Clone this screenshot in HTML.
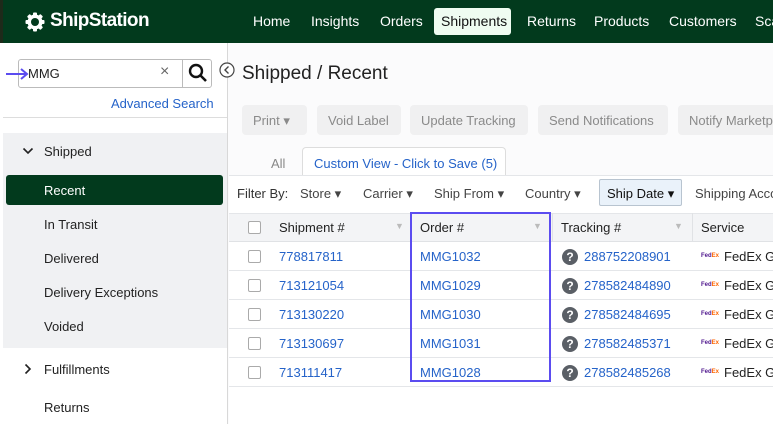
<!DOCTYPE html><html><head><style>
*{margin:0;padding:0;box-sizing:border-box}
body{width:773px;height:424px;overflow:hidden;font-family:"Liberation Sans",sans-serif;background:#fbfbfc;position:relative;color:#222}
.a{position:absolute;white-space:nowrap}
.hdr{left:0;top:0;width:773px;height:43px;background:#023a1d}
.nav{top:13px;color:#fff;font-size:14px}
.side{left:0;top:43px;width:228px;height:381px;background:#fff;border-right:1px solid #d8d8d8}
.si{left:44px;font-size:13px;color:#222}
.btn{top:105px;height:30px;background:#f0f0f1;border-radius:4px;color:#8a8a8a;font-size:13px;padding:8px 11px 0}
.flt{top:186px;font-size:13px;color:#444}
.row{left:229px;width:544px;height:29px;border-bottom:1px solid #e4e6e9;background:#fff}
.cb{width:13px;height:13px;border:1px solid #aaa;border-radius:2px;background:#fff}
.lk{color:#2563c9;font-size:13px}
.q{width:16px;height:16px;border-radius:50%;background:#5a5f66;color:#fff;font-size:12px;font-weight:bold;text-align:center;line-height:16px}
</style></head><body>
<div class="a hdr"></div>
<div class="a" style="left:0;top:0;width:3px;height:424px;background:#1e2a1a"></div>
<svg class="a" style="left:25px;top:12px" width="20" height="20" viewBox="0 0 20 20"><g fill="#fff"><circle cx="10" cy="10" r="7.5"/><rect x="8" y="0.5" width="4" height="4" rx="1"/><rect x="8" y="15.5" width="4" height="4" rx="1"/><rect x="0.5" y="8" width="4" height="4" rx="1"/><rect x="15.5" y="8" width="4" height="4" rx="1"/><rect x="8" y="0.5" width="4" height="4" rx="1" transform="rotate(45 10 10)"/><rect x="8" y="15.5" width="4" height="4" rx="1" transform="rotate(45 10 10)"/><rect x="0.5" y="8" width="4" height="4" rx="1" transform="rotate(45 10 10)"/><rect x="15.5" y="8" width="4" height="4" rx="1" transform="rotate(45 10 10)"/></g><circle cx="10" cy="10" r="4" fill="#023a1d"/></svg>
<div class="a" style="left:50px;top:10px;color:#fff;font-size:19px;font-weight:bold;letter-spacing:-0.6px">ShipStation</div>
<div class="a nav" style="left:253px">Home</div>
<div class="a nav" style="left:311px">Insights</div>
<div class="a nav" style="left:380px">Orders</div>
<div class="a" style="left:434px;top:8px;width:77px;height:27px;background:#effcf1;border-radius:3px"></div>
<div class="a nav" style="left:441px;color:#111">Shipments</div>
<div class="a nav" style="left:527px">Returns</div>
<div class="a nav" style="left:594px">Products</div>
<div class="a nav" style="left:669px">Customers</div>
<div class="a nav" style="left:755px">Sca</div>
<div class="a side"></div>
<div class="a" style="left:18px;top:59px;width:194px;height:29px;border:1px solid #bbb;border-radius:3px;background:#fff"></div>
<div class="a" style="left:182px;top:59px;width:1px;height:29px;background:#bbb"></div>
<div class="a" style="left:28px;top:66px;font-size:13px">MMG</div>
<div class="a" style="left:160px;top:63px;font-size:16px;color:#666">×</div>
<svg class="a" style="left:188px;top:63px" width="20" height="20" viewBox="0 0 20 20"><circle cx="8" cy="8" r="6" fill="none" stroke="#111" stroke-width="2.4"/><path d="M12.5 12.5L18 18" stroke="#111" stroke-width="2.6"/></svg>
<svg class="a" style="left:6px;top:68px" width="24" height="12"><path d="M0 6H20M15 1L21 6L15 11" stroke="#5b4cf0" stroke-width="2" fill="none"/></svg>
<div class="a" style="left:111px;top:96px;font-size:13px;color:#2563c9">Advanced Search</div>
<div class="a" style="left:3px;top:117px;width:224px;height:1px;background:#ddd"></div>
<div class="a" style="left:3px;top:133px;width:224px;height:215px;background:#f0f1f3"></div>
<svg class="a" style="left:22px;top:147px" width="12" height="8"><path d="M1.5 1.5L6 6L10.5 1.5" stroke="#222" stroke-width="1.6" fill="none"/></svg>
<div class="a si" style="top:144px">Shipped</div>
<div class="a" style="left:6px;top:175px;width:217px;height:30px;background:#023a1d;border-radius:3px"></div>
<div class="a si" style="top:183px;color:#fff">Recent</div>
<div class="a si" style="top:217px">In Transit</div>
<div class="a si" style="top:251px">Delivered</div>
<div class="a si" style="top:285px">Delivery Exceptions</div>
<div class="a si" style="top:319px">Voided</div>
<svg class="a" style="left:24px;top:363px" width="8" height="12"><path d="M1.5 1.5L6 6L1.5 10.5" stroke="#222" stroke-width="1.6" fill="none"/></svg>
<div class="a si" style="top:362px">Fulfillments</div>
<div class="a si" style="top:400px">Returns</div>
<svg class="a" style="left:219px;top:62px" width="16" height="16"><circle cx="8" cy="8" r="7" fill="#fff" stroke="#444" stroke-width="1.2"/><path d="M9.5 4.5L6 8L9.5 11.5" stroke="#444" stroke-width="1.4" fill="none"/></svg>
<div class="a" style="left:242px;top:63px;font-size:19px;color:#222">Shipped / Recent</div>
<div class="a btn" style="left:242px;width:65px">Print ▾</div>
<div class="a btn" style="left:317px;width:84px">Void Label</div>
<div class="a btn" style="left:410px;width:118px">Update Tracking</div>
<div class="a btn" style="left:538px;width:130px">Send Notifications</div>
<div class="a btn" style="left:678px;width:110px">Notify Marketp</div>
<div class="a" style="left:271px;top:156px;font-size:13px;color:#888">All</div>
<div class="a" style="left:302px;top:147px;width:204px;height:28px;background:#fff;border:1px solid #ddd;border-bottom:none;border-radius:4px 4px 0 0"></div>
<div class="a" style="left:314px;top:156px;font-size:13px;color:#2563c9">Custom View - Click to Save (5)</div>
<div class="a" style="left:229px;top:175px;width:544px;height:38px;background:#fff;border-top:1px solid #e4e6e9"></div>
<div class="a flt" style="left:237px;color:#333">Filter By:</div>
<div class="a flt" style="left:300px">Store ▾</div>
<div class="a flt" style="left:363px">Carrier ▾</div>
<div class="a flt" style="left:434px">Ship From ▾</div>
<div class="a flt" style="left:525px">Country ▾</div>
<div class="a" style="left:599px;top:179px;width:83px;height:27px;background:#eaf2fa;border:1px solid #b8c4d0;border-radius:2px"></div>
<div class="a flt" style="left:607px;color:#111">Ship Date ▾</div>
<div class="a flt" style="left:695px">Shipping Acco</div>
<div class="a" style="left:229px;top:213px;width:544px;height:29px;background:#f3f4f6;border-top:1px solid #e4e6e9;border-bottom:1px solid #e0e2e5"></div>
<div class="a cb" style="left:248px;top:221px"></div>
<div class="a" style="left:279px;top:220px;font-size:13px">Shipment #</div>
<div class="a" style="left:395px;top:221px;font-size:9px;color:#bbb">▼</div>
<div class="a" style="left:420px;top:220px;font-size:13px">Order #</div>
<div class="a" style="left:533px;top:221px;font-size:9px;color:#bbb">▼</div>
<div class="a" style="left:552px;top:213px;width:1px;height:29px;background:#e0e2e5"></div>
<div class="a" style="left:561px;top:220px;font-size:13px">Tracking #</div>
<div class="a" style="left:674px;top:221px;font-size:9px;color:#bbb">▼</div>
<div class="a" style="left:692px;top:213px;width:1px;height:29px;background:#e0e2e5"></div>
<div class="a" style="left:701px;top:220px;font-size:13px">Service</div>

<div class="a row" style="top:242px"></div><div class="a row" style="top:271px"></div><div class="a row" style="top:300px"></div><div class="a row" style="top:329px"></div><div class="a row" style="top:358px"></div>
<div class="a" style="left:229px;top:387px;width:544px;height:37px;background:#fff"></div>

<div class="a cb" style="left:248px;top:250px"></div><div class="a lk" style="left:279px;top:249px">778817811</div><div class="a lk" style="left:420px;top:249px">MMG1032</div><div class="a q" style="left:562px;top:249px">?</div><div class="a lk" style="left:584px;top:249px">288752208901</div>
<div class="a cb" style="left:248px;top:279px"></div><div class="a lk" style="left:279px;top:278px">713121054</div><div class="a lk" style="left:420px;top:278px">MMG1029</div><div class="a q" style="left:562px;top:278px">?</div><div class="a lk" style="left:584px;top:278px">278582484890</div>
<div class="a cb" style="left:248px;top:308px"></div><div class="a lk" style="left:279px;top:307px">713130220</div><div class="a lk" style="left:420px;top:307px">MMG1030</div><div class="a q" style="left:562px;top:307px">?</div><div class="a lk" style="left:584px;top:307px">278582484695</div>
<div class="a cb" style="left:248px;top:337px"></div><div class="a lk" style="left:279px;top:336px">713130697</div><div class="a lk" style="left:420px;top:336px">MMG1031</div><div class="a q" style="left:562px;top:336px">?</div><div class="a lk" style="left:584px;top:336px">278582485371</div>
<div class="a cb" style="left:248px;top:366px"></div><div class="a lk" style="left:279px;top:365px">713111417</div><div class="a lk" style="left:420px;top:365px">MMG1028</div><div class="a q" style="left:562px;top:365px">?</div><div class="a lk" style="left:584px;top:365px">278582485268</div>

<div class="a" style="left:701px;top:253px;font-size:6px;font-weight:bold"><span style="color:#4d148c">Fed</span><span style="color:#f60">Ex</span></div><div class="a" style="left:724px;top:249px;font-size:13px">FedEx Gr</div>
<div class="a" style="left:701px;top:282px;font-size:6px;font-weight:bold"><span style="color:#4d148c">Fed</span><span style="color:#f60">Ex</span></div><div class="a" style="left:724px;top:278px;font-size:13px">FedEx Gr</div>
<div class="a" style="left:701px;top:311px;font-size:6px;font-weight:bold"><span style="color:#4d148c">Fed</span><span style="color:#f60">Ex</span></div><div class="a" style="left:724px;top:307px;font-size:13px">FedEx Gr</div>
<div class="a" style="left:701px;top:340px;font-size:6px;font-weight:bold"><span style="color:#4d148c">Fed</span><span style="color:#f60">Ex</span></div><div class="a" style="left:724px;top:336px;font-size:13px">FedEx Gr</div>
<div class="a" style="left:701px;top:369px;font-size:6px;font-weight:bold"><span style="color:#4d148c">Fed</span><span style="color:#f60">Ex</span></div><div class="a" style="left:724px;top:365px;font-size:13px">FedEx Gr</div>

<div class="a" style="left:410px;top:212px;width:141px;height:170px;border:2px solid #5b4cf0"></div>
</body></html>
